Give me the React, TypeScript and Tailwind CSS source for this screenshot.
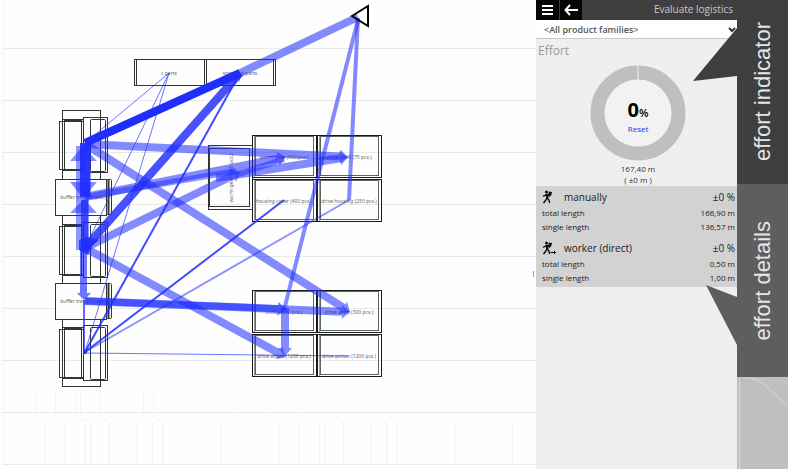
import type { ReactNode } from "react";

const BLUE = "#1f2dff";

type Link = { from: [number, number]; to: [number, number]; w: number; o: number; arrow?: number };

const links: Link[] = [
  { from: [358, 17], to: [240, 73], w: 8, o: 0.55 },
  { from: [240, 73], to: [85, 143], w: 8, o: 1 },
  { from: [240, 73], to: [85, 248], w: 8, o: 0.82 },
  { from: [240, 73], to: [85, 352], w: 2, o: 0.85 },
  { from: [169, 73], to: [85, 143], w: 1, o: 0.65 },
  { from: [169, 73], to: [85, 248], w: 1, o: 0.65 },
  { from: [169, 73], to: [85, 352], w: 1, o: 0.65 },
  { from: [85, 144], to: [348, 157], w: 8, o: 0.55, arrow: 8 },
  { from: [85, 144], to: [350, 312], w: 8, o: 0.55, arrow: 8 },
  { from: [85, 197], to: [286, 157], w: 8, o: 0.55, arrow: 8 },
  { from: [85, 197], to: [236, 171], w: 6, o: 0.5 },
  { from: [216, 178], to: [348, 157], w: 8, o: 0.55, arrow: 8 },
  { from: [236, 175], to: [284, 159], w: 6, o: 0.5 },
  { from: [85, 248], to: [240, 172], w: 8, o: 0.55, arrow: 8 },
  { from: [85, 248], to: [286, 357], w: 8, o: 0.55, arrow: 8 },
  { from: [85, 301], to: [286, 309], w: 7, o: 0.6, arrow: 8 },
  { from: [85, 301], to: [350, 312], w: 8, o: 0.55, arrow: 8 },
  { from: [285, 308], to: [285, 356], w: 8, o: 0.55, arrow: 8 },
  { from: [358, 20], to: [284, 310], w: 4, o: 0.55 },
  { from: [358, 18], to: [349, 200], w: 4, o: 0.55 },
  { from: [85, 352], to: [284, 200], w: 2, o: 0.85 },
  { from: [85, 352], to: [349, 200], w: 2, o: 0.5 },
  { from: [85, 353], to: [348, 356], w: 1, o: 0.65 },
  { from: [84, 300], to: [84, 354], w: 2, o: 0.7 },
];

function LinkLine({ link }: { link: Link }) {
  const [x1, y1] = link.from;
  const [x2, y2] = link.to;
  const dx = x2 - x1;
  const dy = y2 - y1;
  const len = Math.hypot(dx, dy);
  const ux = dx / len;
  const uy = dy / len;
  const a = link.arrow ?? 0;
  const bx = x2 - ux * a;
  const by = y2 - uy * a;
  return (
    <g opacity={link.o}>
      <line x1={x1} y1={y1} x2={a ? bx : x2} y2={a ? by : y2} stroke={BLUE} strokeWidth={link.w} />
      {a > 0 && (
        <polygon
          fill={BLUE}
          points={`${bx - uy * 7},${by + ux * 7} ${x2},${y2} ${bx + uy * 7},${by - ux * 7}`}
        />
      )}
    </g>
  );
}

function Station({ y }: { y: number }) {
  return (
    <g>
      <rect x="62.5" y={y + 2.5} width="21" height="51" />
      <rect x="59.5" y={y + 4.5} width="24" height="48" />
      <rect x="64.5" y={y + 3.5} width="17" height="49" />
      <rect x="83.5" y={y + 0.5} width="24" height="55" />
      <rect x="90.5" y={y + 2.5} width="15" height="52" rx="1" />
    </g>
  );
}

function Buffer({ y }: { y: number }) {
  return (
    <g>
      <rect x="55.5" y={y + 0.5} width="51" height="36" fill="#fefefe" />
      <rect x="106.5" y={y + 0.5} width="5" height="35" rx="1" />
      <path d={`M108.5 ${y + 1}v34`} strokeWidth="2" />
    </g>
  );
}

function Rack({ x, y }: { x: number; y: number }) {
  return (
    <g>
      <rect x={x + 0.5} y={y + 0.5} width="64" height="42" />
      <rect x={x + 3.5} y={y + 1.5} width="58" height="39" stroke="#5c665c" />
      <path d={`M${x + 2.5} ${y + 1}v41`} stroke="#999" />
    </g>
  );
}

const gridRows = [49, 101, 153, 205, 257, 309, 361, 413, 465];
const traces = [45, 66, 86, 91, 110, 138, 153, 163, 221, 279, 300, 320, 325, 344, 372, 387, 397, 455, 513];

const labels: [number, number, string][] = [
  [169, 75, "c parts"],
  [240, 75, "standard parts"],
  [83, 199, "buffer tray (10 pcs.)"],
  [83, 303, "buffer tray (10 pcs.)"],
  [284, 159, "worm gear (500 pcs.)"],
  [349, 159, "drive shaft (75 pcs.)"],
  [284, 203, "housing cover (400 pcs.)"],
  [349, 203, "drive housing (250 pcs.)"],
  [284, 314, "circlip (500 pcs.)"],
  [349, 314, "drive shaft (300 pcs.)"],
  [284, 358, "drive wheel (1200 pcs.)"],
  [349, 358, "drive pinion (1200 pcs.)"],
];

function FactoryLayout() {
  return (
    <svg viewBox="0 0 536 469" className="h-[469px] w-[536px]" role="img" aria-label="Material flow layout">
      <g stroke="#e9e9e9" strokeWidth="1">
        {gridRows.map((y) => (
          <path key={y} d={`M2 ${y - 0.5}H536`} />
        ))}
        <path d="M3.5 0V465" stroke="#efefef" strokeDasharray="6 3" />
      </g>
      <g stroke="#f0f0f0">
        {traces.map((x) => (
          <path key={x} d={`M${x - 6.5} 418l6 6V464`} fill="none" />
        ))}
        <path d="M35.5 390V412M55.5 390V412M75.5 390V412M80.5 390V412M100.5 390V412M143.5 390V412M153.5 390V412" strokeDasharray="2 1" />
        <path d="M200 389l42 23M222 389l58 23M248 389l58 23M305 389l55 23" strokeDasharray="1 3" />
      </g>
      <g fill="none" stroke="#303830" strokeWidth="1">
        <rect x="62.5" y="110.5" width="38" height="276" />
        <Station y={117} />
        <Station y={222} />
        <Station y={325} />
        <Buffer y={179} />
        <Buffer y={283} />
        <rect x="134.5" y="59.5" width="141" height="26" />
        <path d="M136.5 60v25M204.5 60v25M206.5 60v25M273.5 60v25" />
        <rect x="208.5" y="145.5" width="44" height="64" />
        <rect x="209.5" y="148.5" width="40" height="58" />
      </g>
      <g fill="none" stroke="#181c18">
        <Rack x={252} y={135} />
        <Rack x={317} y={135} />
        <Rack x={252} y={179} />
        <Rack x={317} y={179} />
        <Rack x={252} y={290} />
        <Rack x={317} y={290} />
        <Rack x={252} y={334} />
        <Rack x={317} y={334} />
      </g>
      <g className="font-['Noto_Sans',sans-serif] text-[5px]" fill="#666" textAnchor="middle">
        {labels.map(([x, y, t]) => (
          <text key={`${x}-${y}`} x={x} y={y}>
            {t}
          </text>
        ))}
        <text transform="translate(233 178) rotate(-90)">worm gear (300 pcs.)</text>
      </g>
      {links.map((l, i) => (
        <LinkLine key={i} link={l} />
      ))}
      <g fill={BLUE}>
        <path d="M76 146h15v52H76zM76 198h13v52H76z" opacity="0.5" />
        <path d="M80 143h10v54H80z" opacity="0.9" />
        <path d="M81 200h7v48h-7z" opacity="0.75" />
        <path d="M80 248h7v45h4l-7 7-7-7h3z" opacity="0.65" />
        <path d="M83 146l14 15H70zM83 198L70 182h27zM84 199l13 14H70z" opacity="0.55" />
        <path d="M79 240l7-3 13 3-8 7-3 8-9-5z" opacity="0.8" />
        <circle cx="85" cy="352" r="2" />
        <path d="M228 77l12-6v11l-2-4z" opacity="0.6" />
      </g>
      <path d="M352 16L368 6v20z" fill="none" stroke="#000" strokeWidth="2" />
      <path d="M533.5 271v6" stroke="#8f96ff" />
    </svg>
  );
}

function Walker({ direct }: { direct?: boolean }) {
  return (
    <svg viewBox="0 0 14 14" className="h-[14px] w-[14px]" fill="none" stroke="#080808" aria-hidden="true">
      <circle cx="4.5" cy="2" r="1.5" fill="#080808" stroke="none" />
      <path d="M7 1.5l3 0.5-1 4-3-1z" fill="#080808" stroke="none" />
      <path d="M4.5 4l1 4.5" strokeWidth="2.2" />
      <path d="M4.5 4.5L1 6.5M5 8L3.5 10.5 1.5 13M5 8l2 2 0.5 3" strokeWidth="1.4" />
      <path d="M5 4.5l3 2" strokeWidth="1.2" />
      {direct && <path d="M8.5 11.5h5M12 10l1.5 1.5L12 13" />}
    </svg>
  );
}

function Detail({ icon, name, total, single }: { icon: ReactNode; name: string; total: string; single: string }) {
  return (
    <section className="text-[8px] text-[#202020]">
      <div className="flex h-[18px] items-center text-[10px]">
        {icon}
        <h3 className="ml-2 flex-1">{name}</h3>
        <span>±0 %</span>
      </div>
      <dl>
        <div className="flex h-[14px] items-center justify-between">
          <dt>total length</dt>
          <dd>{total}</dd>
        </div>
        <div className="flex h-[14px] items-center justify-between">
          <dt>single length</dt>
          <dd>{single}</dd>
        </div>
      </dl>
    </section>
  );
}

export default function App() {
  return (
    <div className="flex min-h-screen overflow-hidden bg-[#fefefe] font-['Open_Sans','Noto_Sans',sans-serif]">
      <main className="min-w-0 flex-1 overflow-hidden">
        <FactoryLayout />
      </main>

      <aside className="w-[201px] shrink-0 bg-[#efefef]">
        <header className="flex h-[20px] bg-[#3f3f3f]">
          <button aria-label="Menu" className="flex w-[23px] items-center justify-center bg-[#060606]">
            <svg viewBox="0 0 12 12" className="h-3 w-3" stroke="#fff" strokeWidth="2">
              <path d="M0 2h11M0 6h11M0 10h11" />
            </svg>
          </button>
          <button aria-label="Back" className="ml-px flex w-[22px] items-center justify-center bg-[#060606]">
            <svg viewBox="0 0 14 12" className="h-3 w-[14px]" stroke="#fff" strokeWidth="2" fill="none">
              <path d="M14 6H2M6 1L1.5 6 6 11" />
            </svg>
          </button>
          <h1 className="flex-1 pr-1 text-right text-[10px] leading-[18px] text-[#c8c8c8]">Evaluate logistics</h1>
        </header>
        <div className="relative h-[19px] border-b border-[#c9c9c9] bg-white">
          <select
            aria-label="Product family"
            className="block h-[19px] w-full appearance-none bg-transparent pt-px pl-2 text-[9px] font-semibold text-[#555]"
          >
            <option>&lt;All product families&gt;</option>
          </select>
          <svg viewBox="0 0 8 6" className="pointer-events-none absolute top-[7px] right-px h-[6px] w-2" fill="none" stroke="#333" strokeWidth="2">
            <path d="M1 1l3 3 3-3" />
          </svg>
        </div>
        <h2 className="pl-[2px] text-[12px] leading-6 text-[#999]">Effort</h2>
        <div className="flex flex-col items-center pl-[3px] text-[#333]">
          <div className="grid h-[100px] w-24 items-start">
            <svg viewBox="0 0 96 96" className="col-start-1 row-start-1 mt-[2px] h-24 w-24" aria-hidden="true">
              <circle cx="48" cy="48" r="40.5" fill="#f2f2f2" stroke="#bfbfbf" strokeWidth="14" />
              <path d="M48 0v15" stroke="#efefef" />
            </svg>
            <div className="col-start-1 row-start-1 self-center pt-2 text-center">
              <p className="text-[20px] leading-5 font-bold text-black">
                0<span className="text-[11px] font-semibold">%</span>
              </p>
              <button className="block w-full text-[8px] leading-3 text-[#2a2aff]">Reset</button>
            </div>
          </div>
          <p className="text-center text-[8px] leading-[11px]">
            167,40 m
            <br />( ±0 m )
          </p>
        </div>
        <div className="mt-px flex flex-col gap-[5px] bg-[#d2d2d2] pt-[2px] pr-[2px] pb-[2px] pl-[6px]">
          <Detail icon={<Walker />} name="manually" total="166,90 m" single="136,57 m" />
          <Detail icon={<Walker direct />} name="worker (direct)" total="0,50 m" single="1,00 m" />
        </div>
      </aside>

      <div className="flex w-[51px] shrink-0 flex-col bg-[#bfbfbf] font-['Liberation_Sans',sans-serif] text-[22px] text-[#e6e6e6]">
        <div className="relative flex h-[184px] items-center justify-center bg-[#3f3f3f]">
          <svg viewBox="0 0 44 53" className="absolute top-7 right-full h-[53px] w-11" aria-hidden="true">
            <path d="M44 0V48L0 53z" fill="#3f3f3f" />
          </svg>
          <p className="rotate-180 [writing-mode:vertical-rl]">effort indicator</p>
        </div>
        <div className="relative flex h-[193px] items-center justify-center bg-[#5e5e5e]">
          <svg viewBox="0 0 31 60" className="absolute top-[101px] right-full h-[60px] w-[31px]" aria-hidden="true">
            <path d="M0 0L31 12V60z" fill="#5e5e5e" />
          </svg>
          <p className="rotate-180 [writing-mode:vertical-rl]">effort details</p>
        </div>
        <svg viewBox="0 0 51 92" className="h-[92px] w-full" fill="none" stroke="#d8d8d8" aria-hidden="true">
          <path d="M2.5 0V92M8 1q12 0 20 7L51 30" />
          <path d="M20 1L51 6" strokeDasharray="1 3" />
        </svg>
      </div>
    </div>
  );
}
